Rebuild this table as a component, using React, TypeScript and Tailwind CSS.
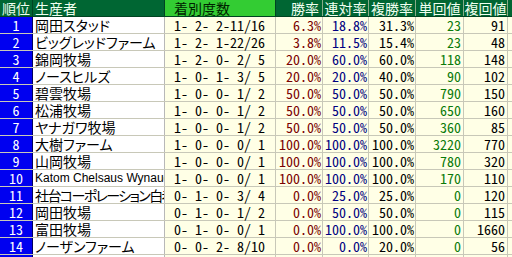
import React from "react"

const rows = [
  { rank: 1, name: "岡田スタッド", rec: "1- 2- 2-11/16", win: "6.3%", ren: "18.8%", fuku: "31.3%", tan: "23", fk: "91" },
  { rank: 2, name: "ビッグレッドファーム", rec: "1- 2- 1-22/26", win: "3.8%", ren: "11.5%", fuku: "15.4%", tan: "23", fk: "48" },
  { rank: 3, name: "錦岡牧場", rec: "1- 2- 0- 2/ 5", win: "20.0%", ren: "60.0%", fuku: "60.0%", tan: "118", fk: "148" },
  { rank: 4, name: "ノースヒルズ", rec: "1- 0- 1- 3/ 5", win: "20.0%", ren: "20.0%", fuku: "40.0%", tan: "90", fk: "102" },
  { rank: 5, name: "碧雲牧場", rec: "1- 0- 0- 1/ 2", win: "50.0%", ren: "50.0%", fuku: "50.0%", tan: "790", fk: "150" },
  { rank: 6, name: "松浦牧場", rec: "1- 0- 0- 1/ 2", win: "50.0%", ren: "50.0%", fuku: "50.0%", tan: "650", fk: "160" },
  { rank: 7, name: "ヤナガワ牧場", rec: "1- 0- 0- 1/ 2", win: "50.0%", ren: "50.0%", fuku: "50.0%", tan: "360", fk: "85" },
  { rank: 8, name: "大樹ファーム", rec: "1- 0- 0- 0/ 1", win: "100.0%", ren: "100.0%", fuku: "100.0%", tan: "3220", fk: "770" },
  { rank: 9, name: "山岡牧場", rec: "1- 0- 0- 0/ 1", win: "100.0%", ren: "100.0%", fuku: "100.0%", tan: "780", fk: "320" },
  { rank: 10, name: "Katom Chelsaus Wynaud", rec: "1- 0- 0- 0/ 1", win: "100.0%", ren: "100.0%", fuku: "100.0%", tan: "170", fk: "110", latin: true },
  { rank: 11, name: "社台コーポレーション白老", rec: "0- 1- 0- 3/ 4", win: "0.0%", ren: "25.0%", fuku: "25.0%", tan: "0", fk: "120", tight: true },
  { rank: 12, name: "岡田牧場", rec: "0- 1- 0- 1/ 2", win: "0.0%", ren: "50.0%", fuku: "50.0%", tan: "0", fk: "115" },
  { rank: 13, name: "富田牧場", rec: "0- 1- 0- 0/ 1", win: "0.0%", ren: "100.0%", fuku: "100.0%", tan: "0", fk: "1660" },
  { rank: 14, name: "ノーザンファーム", rec: "0- 0- 2- 8/10", win: "0.0%", ren: "0.0%", fuku: "20.0%", tan: "0", fk: "56" },
  { rank: 15, name: "", rec: "", win: "", ren: "", fuku: "", tan: "", fk: "" },
]

const mono = "[font-feature-settings:'hwid'] whitespace-pre"

export default function App() {
  return (
    <div className="w-[512px] h-[257px] overflow-hidden bg-white text-[14px] leading-[16px] [font-family:'Noto_Sans_CJK_JP',sans-serif]">
      {/* header */}
      <div className="flex h-[17px] bg-[#006633] text-[#f0fff0] border-b border-[#004422]">
        <div className="w-[33px] shrink-0 border-r border-[#004422] pl-[2px]">順位</div>
        <div className="w-[132px] shrink-0 border-r border-[#004422] pl-[2px]">生産者</div>
        <div className="w-[111px] shrink-0 border-r border-[#004422] bg-[#33cc33] text-[#002200] pl-[9px]">着別度数</div>
        <div className="w-[47px] shrink-0 border-r border-[#88aa88] text-right pr-[3px]">勝率</div>
        <div className="w-[46px] shrink-0 border-r border-[#88aa88] text-center">連対率</div>
        <div className="w-[47px] shrink-0 border-r border-[#88aa88] text-center">複勝率</div>
        <div className="w-[48px] shrink-0 border-r border-[#88aa88] text-center">単回値</div>
        <div className="w-[44px] shrink-0 border-r border-[#88aa88] text-center">複回値</div>
        <div className="flex-1" />
      </div>
      {rows.map((r) => (
        <div key={r.rank} className="flex h-[17px] border-b border-[#c8c8b8] bg-[#ffffe6]">
          <div className={`w-[33px] shrink-0 bg-[#0000f0] text-white text-center border-r border-[#000060] ${mono}`}>{r.rank}</div>
          <div
            className={`w-[132px] shrink-0 bg-white border-r border-[#b8b8b8] pl-[2px] overflow-hidden whitespace-nowrap [font-feature-settings:'palt'] ${
              r.latin ? "[font-family:'Liberation_Sans',sans-serif] text-[12px]" : ""
            } ${r.tight ? "tracking-[-1.6px]" : ""}`}
          >
            {r.name}
          </div>
          <div className={`w-[111px] shrink-0 border-r border-[#c8c8b8] pl-[9px] ${mono}`}>{r.rec}</div>
          <div className={`w-[47px] shrink-0 border-r border-[#c8c8b8] text-right pr-[1px] text-[#7a0000] ${mono}`}>{r.win}</div>
          <div className={`w-[46px] shrink-0 border-r border-[#c8c8b8] text-right pr-[1px] text-[#000080] ${mono}`}>{r.ren}</div>
          <div className={`w-[47px] shrink-0 border-r border-[#c8c8b8] text-right pr-[1px] text-black ${mono}`}>{r.fuku}</div>
          <div className={`w-[48px] shrink-0 border-r border-[#c8c8b8] text-right pr-[2px] text-[#0a7a0a] ${mono}`}>{r.tan}</div>
          <div className={`w-[44px] shrink-0 border-r border-[#c8c8b8] text-right pr-[2px] text-black ${mono}`}>{r.fk}</div>
          <div className="flex-1" />
        </div>
      ))}
    </div>
  )
}
